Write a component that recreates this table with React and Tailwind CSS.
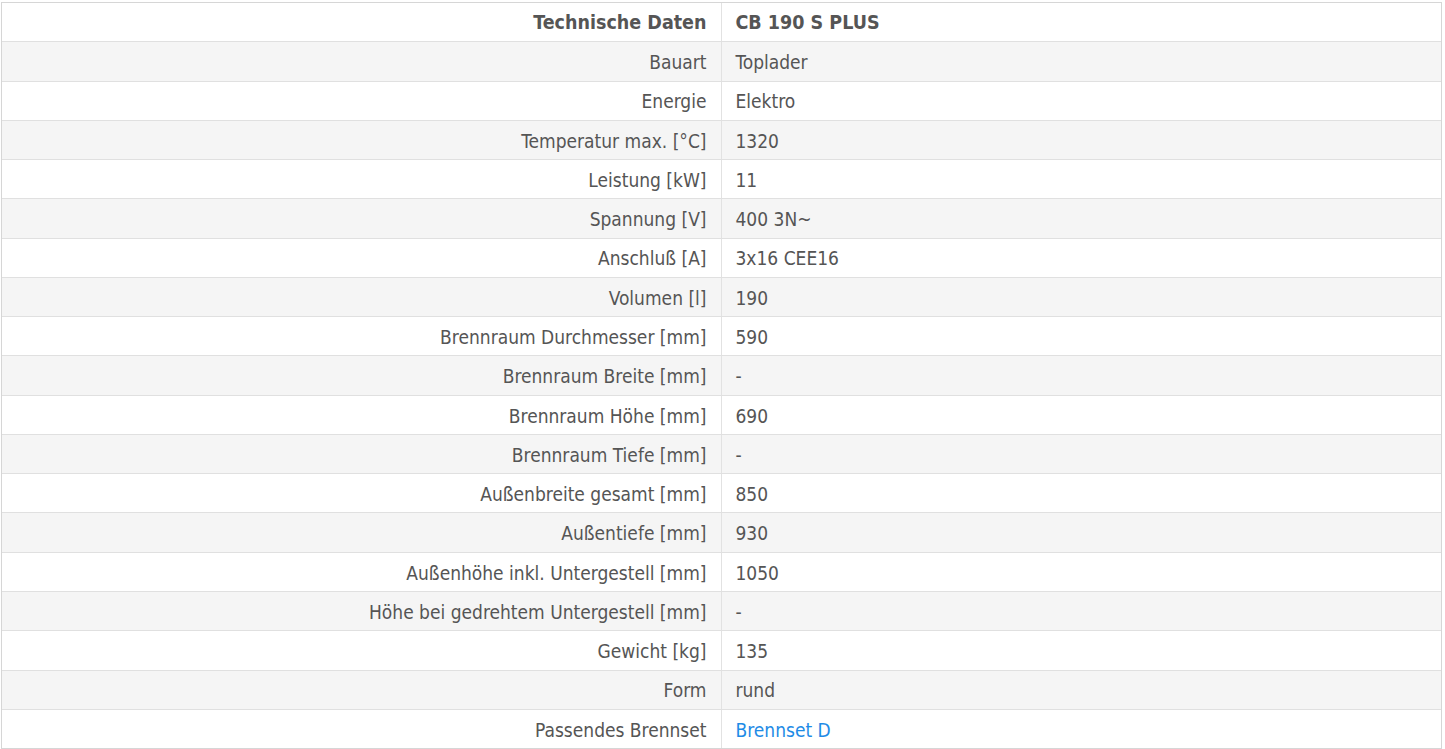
import React from "react";

const rows = [
  ["Bauart", "Toplader"],
  ["Energie", "Elektro"],
  ["Temperatur max. [°C]", "1320"],
  ["Leistung [kW]", "11"],
  ["Spannung [V]", "400 3N~"],
  ["Anschluß [A]", "3x16 CEE16"],
  ["Volumen [l]", "190"],
  ["Brennraum Durchmesser [mm]", "590"],
  ["Brennraum Breite [mm]", "-"],
  ["Brennraum Höhe [mm]", "690"],
  ["Brennraum Tiefe [mm]", "-"],
  ["Außenbreite gesamt [mm]", "850"],
  ["Außentiefe [mm]", "930"],
  ["Außenhöhe inkl. Untergestell [mm]", "1050"],
  ["Höhe bei gedrehtem Untergestell [mm]", "-"],
  ["Gewicht [kg]", "135"],
  ["Form", "rund"],
  ["Passendes Brennset", "Brennset D", true],
];

export default function App() {
  return (
    <div
      className="w-[1445px] h-[749px] bg-white pt-[2px] pl-[1px] overflow-hidden"
      style={{ fontFamily: '"DejaVu Sans Condensed", "DejaVu Sans", sans-serif' }}
    >
      <div className="w-[1441px] h-[747px] flex flex-col border-[1.5px] border-[#d6d6d6] text-[19px] text-[#555]">
        <div className="grid grid-cols-2 flex-1 bg-white font-bold text-[19.5px]">
          <div className="flex items-center justify-end pr-[14px] pt-[1px] border-r-[1.5px] border-[#e2e2e2]">Technische Daten</div>
          <div className="flex items-center pl-[14px] pt-[1px]">CB 190 S PLUS</div>
        </div>
        {rows.map(([k, v, link], i) => (
          <div
            key={k}
            className={`grid grid-cols-2 flex-1 border-t-[1.5px] border-[#e0e0e0] ${i % 2 === 0 ? "bg-[#f5f5f5]" : "bg-white"}`}
          >
            <div className="flex items-center justify-end pr-[14px] pt-[2px] border-r-[1.5px] border-[#e2e2e2]">{k}</div>
            <div className={`flex items-center pl-[14px] pt-[2px] ${link ? "text-[#1e8be6]" : ""}`}>{v}</div>
          </div>
        ))}
      </div>
    </div>
  );
}
